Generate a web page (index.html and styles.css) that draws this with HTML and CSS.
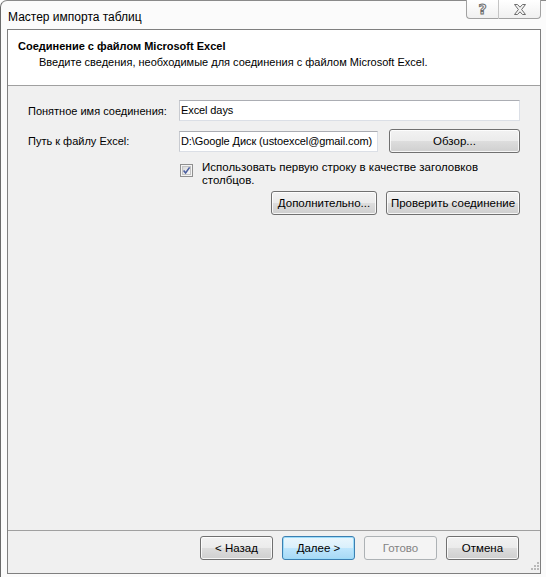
FILE: index.html
```html
<!DOCTYPE html>
<html lang="ru">
<head>
<meta charset="utf-8">
<title>Мастер импорта таблиц</title>
<link rel="stylesheet" href="styles.css">
</head>
<body>
<div class="window">
  <div class="titlebar">
    <div class="title">Мастер импорта таблиц</div>
    <div class="caption-btns">
      <div class="cap cap-help"><span class="help-glyph">?</span></div>
      <div class="cap cap-close">
        <svg width="14" height="11" viewBox="0 0 14 11"><path d="M1.5 0.5 H4.5 L7 3.2 L9.5 0.5 H12.5 L8.6 5.5 L12.5 10.5 H9.5 L7 7.8 L4.5 10.5 H1.5 L5.4 5.5 Z" fill="#f4f4f4" stroke="#6d6d6d" stroke-width="1" stroke-linejoin="round"/></svg>
      </div>
    </div>
  </div>
  <div class="panel">
    <div class="header">
      <div class="header-title">Соединение с файлом Microsoft Excel</div>
      <div class="header-sub">Введите сведения, необходимые для соединения с файлом Microsoft Excel.</div>
    </div>
    <div class="form">
      <div class="row">
        <div class="label">Понятное имя соединения:</div>
        <div class="input input-wide">Excel days</div>
      </div>
      <div class="row">
        <div class="label">Путь к файлу Excel:</div>
        <div class="input input-path">D:\Google Диск (ustoexcel@gmail.com)</div>
        <div class="btn btn-browse">Обзор...</div>
      </div>
      <div class="check-row">
        <svg class="checkbox" width="13" height="13" viewBox="0 0 13 13">
          <defs>
            <linearGradient id="cbg" x1="0" y1="0" x2="1" y2="1">
              <stop offset="0" stop-color="#d6d6d6"/>
              <stop offset="1" stop-color="#fbfbfb"/>
            </linearGradient>
          </defs>
          <rect x="0.5" y="0.5" width="12" height="12" fill="#f4f4f4" stroke="#8f8f8f"/>
          <rect x="2.5" y="2.5" width="8" height="8" fill="url(#cbg)" stroke="#c4c4c4"/>
          <path d="M3.6 6.4 L5.6 9 L9.6 3.4" fill="none" stroke="#4b5fa0" stroke-width="1.6"/>
        </svg>
        <div class="check-text">Использовать первую строку в качестве заголовков<br>столбцов.</div>
      </div>
      <div class="actions">
        <div class="btn btn-more">Дополнительно...</div>
        <div class="btn btn-test">Проверить соединение</div>
      </div>
    </div>
    <div class="footer">
      <div class="btn btn-nav">&lt; Назад</div>
      <div class="btn btn-nav btn-default">Далее &gt;</div>
      <div class="btn btn-nav btn-disabled">Готово</div>
      <div class="btn btn-nav">Отмена</div>
    </div>
    <svg class="grip" width="10" height="10" viewBox="0 0 10 10">
      <g fill="#b8b8b8">
        <rect x="8" y="0" width="2" height="2"/>
        <rect x="5" y="3" width="2" height="2"/><rect x="8" y="3" width="2" height="2"/>
        <rect x="2" y="6" width="2" height="2"/><rect x="5" y="6" width="2" height="2"/><rect x="8" y="6" width="2" height="2"/>
      </g>
    </svg>
  </div>
</div>
</body>
</html>
```

FILE: styles.css
```css
html, body {
  margin: 0;
  padding: 0;
  background: #ffffff;
}

body {
  font-family: "Liberation Sans", Arial, sans-serif;
  font-size: 11px;
  color: #000;
}

.window {
  width: 546px;
  height: 577px;
  box-sizing: border-box;
  border-left: 1px solid #6a6a6a;
  border-top: 1px solid #8a8a8a;
  border-radius: 7px 0 0 0;
  background: #fbfbfb;
  padding: 0 5px 3px 6px;
  display: flex;
  flex-direction: column;
}

.titlebar {
  height: 28px;
  display: flex;
  justify-content: space-between;
  align-items: flex-start;
  flex: none;
}

.title {
  font-size: 12px;
  margin-top: 9px;
  margin-left: 1px;
  color: #000;
}

.caption-btns {
  display: flex;
  margin-top: -1px;
  height: 19px;
}

.cap {
  height: 19px;
  box-sizing: border-box;
  border: 1px solid #a2a2a2;
  border-top: none;
  background: linear-gradient(#ffffff, #f0f0f0);
  display: flex;
  align-items: center;
  justify-content: center;
}

.cap-help {
  width: 32px;
  border-radius: 0 0 0 4px;
  border-right: none;
}

.cap-close {
  width: 43px;
  border-radius: 0 0 4px 0;
  border-left: 1px solid #c4c4c4;
}

.help-glyph {
  font-family: "DejaVu Sans", sans-serif;
  font-weight: bold;
  font-size: 14px;
  line-height: 14px;
  color: #f4f4f4;
  -webkit-text-stroke: 1px #6d6d6d;
  margin-top: -1px;
}

.panel {
  flex: 1;
  border: 1px solid #7f7f7f;
  background: #f0f0f0;
  display: flex;
  flex-direction: column;
  position: relative;
}

.header {
  background: #ffffff;
  border-bottom: 1px solid #a0a0a0;
  height: 56px;
  box-sizing: border-box;
  padding: 9px 0 0 10px;
}

.header-title {
  font-weight: bold;
  line-height: 14px;
}

.header-sub {
  margin-top: 2px;
  padding-left: 21px;
  line-height: 14px;
}

.form {
  padding: 14px 20px 0 20px;
  display: flex;
  flex-direction: column;
}

.row {
  display: flex;
  align-items: center;
  margin-bottom: 7px;
}

.row + .row {
  margin-top: 1px;
}

.label {
  width: 151px;
  flex: none;
}

.input {
  height: 21px;
  box-sizing: border-box;
  background: #fff;
  border: 1px solid #dbdfe6;
  border-top-color: #abadb3;
  border-left-color: #c8cbd1;
  padding: 0 1px;
  line-height: 19px;
  font-size: 11px;
  letter-spacing: -0.1px;
  white-space: nowrap;
  overflow: hidden;
}

.input-wide {
  flex: 1;
}

.input-path {
  width: 199px;
}

.btn {
  box-sizing: border-box;
  height: 24px;
  border: 1px solid #707070;
  border-radius: 3px;
  background: linear-gradient(#f2f2f2 0%, #ebebeb 50%, #dddddd 51%, #cfcfcf 100%);
  box-shadow: inset 0 0 0 1px rgba(255,255,255,0.8);
  display: flex;
  align-items: center;
  justify-content: center;
  font-size: 11.5px;
  white-space: nowrap;
}

.btn-browse {
  width: 131px;
  margin-left: 11px;
}

.check-row {
  display: flex;
  align-items: flex-start;
  margin-left: 152px;
  margin-top: 1px;
}

.checkbox {
  flex: none;
  margin-top: 3px;
}

.check-text {
  margin-left: 9px;
  line-height: 13px;
  font-size: 11.5px;
}

.actions {
  display: flex;
  justify-content: flex-end;
  gap: 9px;
  margin-top: 4px;
}

.btn-more {
  width: 106px;
}

.btn-test {
  width: 134px;
}

.footer {
  margin-top: auto;
  border-top: 1px solid #a0a0a0;
  padding: 5px 21px 13px 0;
  display: flex;
  justify-content: flex-end;
  gap: 9px;
}

.btn-nav {
  width: 73px;
}

.btn-default {
  border-color: #3c7fb1;
  background: linear-gradient(#eaf6fd 0%, #d9f0fc 50%, #bee6fd 51%, #a7d9f5 100%);
  box-shadow: inset 0 0 0 1px #9cdcfa;
}

.btn-disabled {
  border-color: #adb2b5;
  background: #f4f4f4;
  box-shadow: none;
  color: #838383;
}

.grip {
  position: absolute;
  right: 1px;
  bottom: 1px;
}
```
